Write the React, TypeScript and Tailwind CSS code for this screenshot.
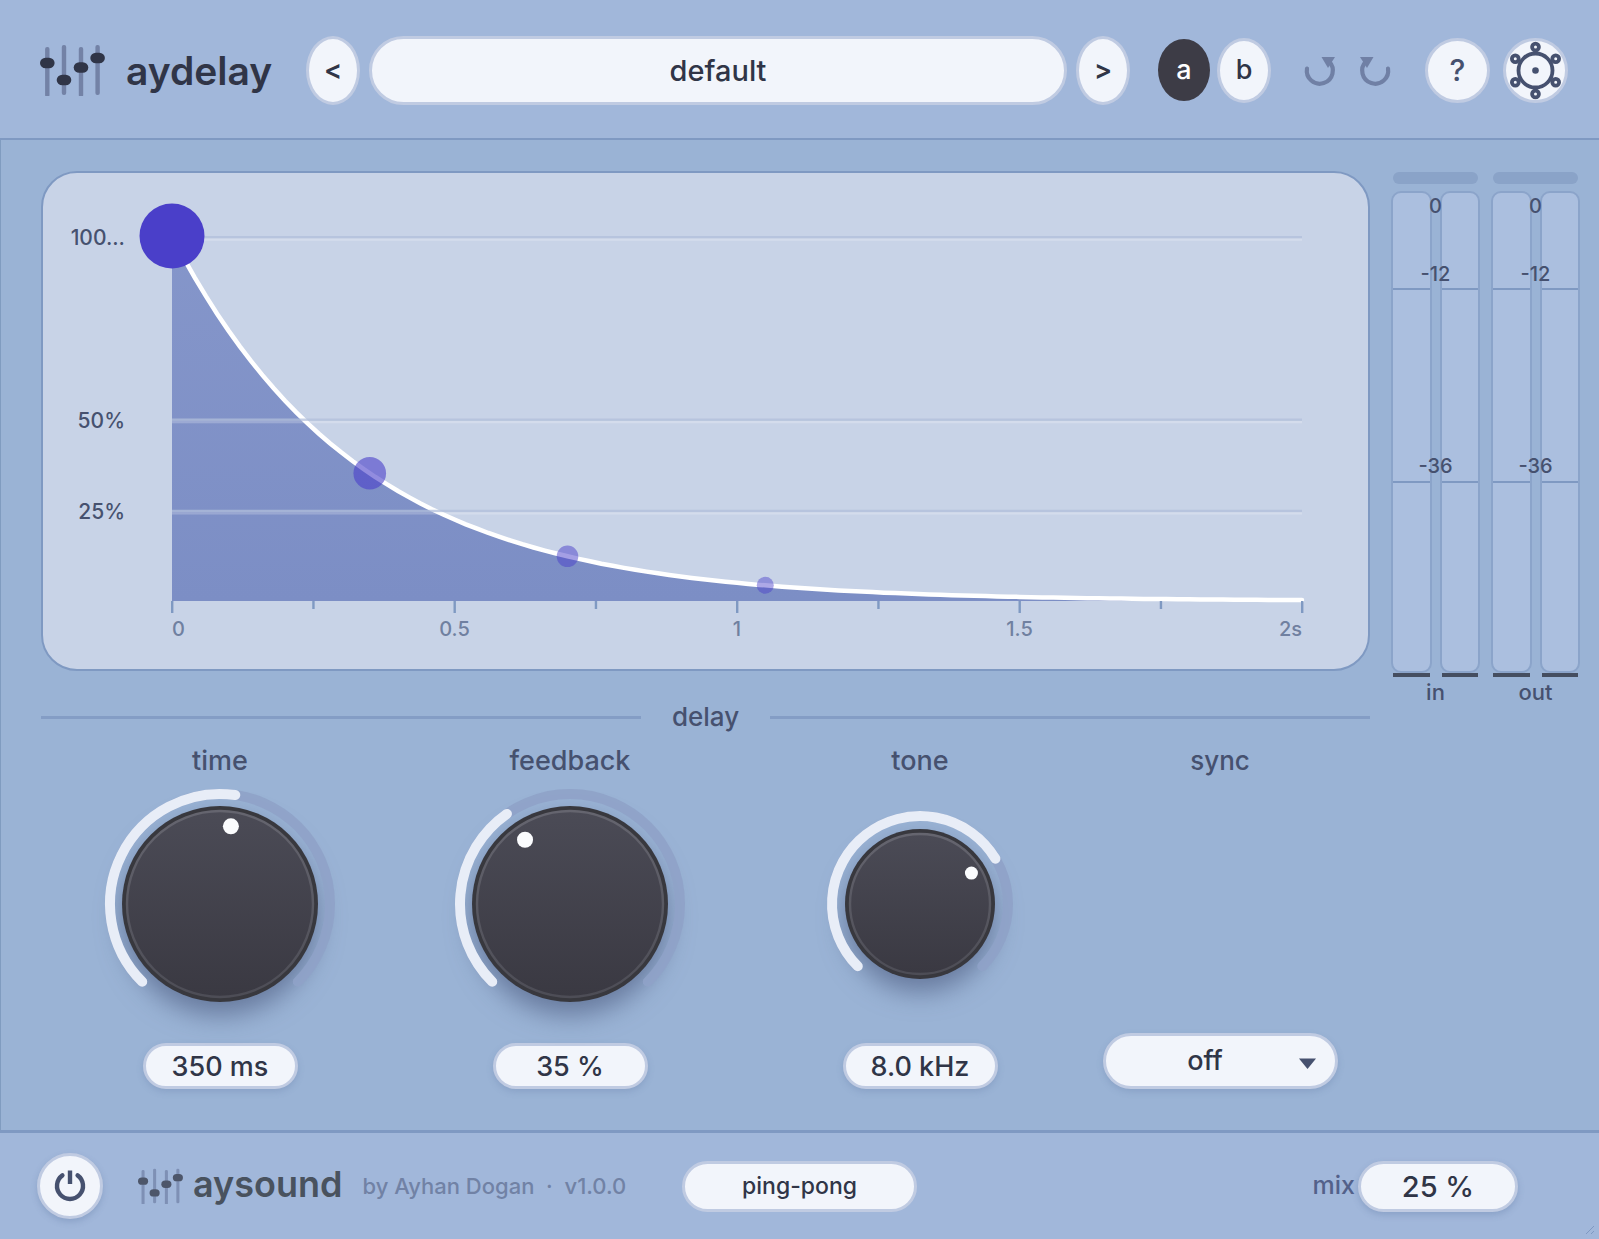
import { useState } from "react";

const curve = { left: 129, right: 1259, top: 63, bottom: 428, feedback: 0.35, time: 0.35 };

const toX = (t: number) => curve.left + ((curve.right - curve.left) * t) / 2;
const toY = (v: number) => curve.bottom - (curve.bottom - curve.top) * v;
const decay = (t: number) => Math.pow(curve.feedback, t / curve.time);

const curvePoints = Array.from({ length: 101 }, (_, i) => {
  const t = i / 50;
  return `${toX(t).toFixed(1)},${toY(decay(t)).toFixed(1)}`;
}).join(" L");

const echoes = [
  { t: 0, r: 32.5, opacity: 1 },
  { t: 0.35, r: 16.3, opacity: 0.6 },
  { t: 0.7, r: 10.8, opacity: 0.5 },
  { t: 1.05, r: 8.5, opacity: 0.45 },
];

const levels = [
  { label: "100...", value: 1 },
  { label: "50%", value: 0.5 },
  { label: "25%", value: 0.25 },
];

const ticks = [
  { t: 0, label: "0", anchor: "start" },
  { t: 0.25 },
  { t: 0.5, label: "0.5", anchor: "middle" },
  { t: 0.75 },
  { t: 1, label: "1", anchor: "middle" },
  { t: 1.25 },
  { t: 1.5, label: "1.5", anchor: "middle" },
  { t: 1.75 },
  { t: 2, label: "2s", anchor: "end" },
] as { t: number; label?: string; anchor?: "start" | "middle" | "end" }[];

const knobs = [
  { name: "time", value: "350 ms", angle: 8, radius: 98, arc: 110, dot: 8 },
  { name: "feedback", value: "35 %", angle: -35, radius: 98, arc: 110, dot: 8 },
  { name: "tone", value: "8.0 kHz", angle: 59, radius: 75, arc: 88, dot: 6.5 },
];

const lightButton =
  "flex shrink-0 items-center justify-center rounded-[50%] border-[3px] border-[#c0cbe2] bg-[#f2f5fb] font-medium text-[#303547]";

function SlidersLogo({ className, bar, handle }: { className: string; bar: string; handle: string }) {
  const faders = [
    { x: 7.3, y: 3, knob: 19 },
    { x: 24, y: 1, knob: 36 },
    { x: 41, y: 3, knob: 23.5 },
    { x: 57.6, y: 1, knob: 14 },
  ];
  return (
    <svg className={className} viewBox="0 0 65 52" aria-hidden="true">
      {faders.map((f) => (
        <g key={f.x}>
          <rect x={f.x - 2.2} y={f.y} width="4.4" height="50" rx="2" fill={bar} />
          <rect x={f.x - 7.3} y={f.knob - 5.3} width="14.6" height="10.6" rx="5.6" fill={handle} />
        </g>
      ))}
    </svg>
  );
}

function UndoIcon({ flipped = false }: { flipped?: boolean }) {
  return (
    <svg className={flipped ? "-scale-x-100" : ""} width="36" height="36" viewBox="0 0 36 36" aria-hidden="true">
      <path d="M5 16.5 A13 13 0 1 0 27 9.5" fill="none" stroke="#7080a5" strokeWidth="4.2" strokeLinecap="round" />
      <path d="M19.5 5 L33 5 L26 16 Z" fill="#7080a5" />
    </svg>
  );
}

function SettingsIcon() {
  const nodes = [
    [0, -23.4],
    [20.2, -11.7],
    [20.2, 11.7],
    [0, 23.4],
    [-20.2, 11.7],
    [-20.2, -11.7],
  ];
  return (
    <svg className="shrink-0" width="59" height="59" viewBox="-29.5 -29.5 59 59" fill="none" stroke="#46516f" strokeWidth="3.8" aria-hidden="true">
      <circle r="17" />
      <circle r="3.3" fill="#46516f" stroke="none" />
      {nodes.map(([x, y]) => (
        <circle key={`${x} ${y}`} cx={x} cy={y} r="3.4" />
      ))}
    </svg>
  );
}

function Header() {
  const [slot, setSlot] = useState("a");
  const on = "h-[62px] w-[52px] rounded-[50%] bg-[#3d3c46] font-medium text-white";
  const off = `${lightButton} h-[65px] w-[54px]`;

  return (
    <header className="flex h-[140px] items-center border-b-2 border-[#7f99c2] bg-[#a1b7da] pt-[2px] pr-[31px] pl-10">
      <div className="flex w-[266px] shrink-0 items-center gap-[21px]">
        <SlidersLogo className="w-[65px]" bar="#7382a6" handle="#303547" />
        <h1 className="pt-[2px] text-[39px] font-semibold text-[#303547]">aydelay</h1>
      </div>

      <div className="flex flex-1 items-center gap-[9px]">
        <button className={`${lightButton} h-[69px] w-[54px] text-[27px]`} aria-label="Previous preset">
          <span className="font-semibold">&lt;</span>
        </button>
        <button className="h-[69px] flex-1 rounded-full border-[3px] border-[#c0cbe2] bg-[#f2f5fb] pt-[2px] text-[29px] font-medium text-[#303547]">
          default
        </button>
        <button className={`${lightButton} h-[69px] w-[54px] text-[27px]`} aria-label="Next preset">
          <span className="font-semibold">&gt;</span>
        </button>
      </div>

      <div className="ml-[28px] flex items-center gap-[7px] text-[27px]">
        <button className={slot === "a" ? on : off} onClick={() => setSlot("a")}>
          a
        </button>
        <button className={slot === "b" ? on : off} onClick={() => setSlot("b")}>
          b
        </button>
      </div>

      <div className="ml-[31px] flex gap-[19px]">
        <button aria-label="Undo">
          <UndoIcon />
        </button>
        <button aria-label="Redo">
          <UndoIcon flipped />
        </button>
      </div>

      <div className="ml-8 flex gap-[13px]">
        <button className={`${lightButton} size-[65px] text-[30px]`} aria-label="Help">
          <span className="text-[#46516f]">?</span>
        </button>
        <button className={`${lightButton} size-[65px]`} aria-label="Settings">
          <SettingsIcon />
        </button>
      </div>
    </header>
  );
}

function DelayGraph() {
  return (
    <div className="overflow-hidden rounded-[36px] border-2 border-[#7f99c2] bg-[#c8d3e7]">
      <svg className="block w-full" viewBox="0 0 1325 496" role="img" aria-label="Echo decay">
        <defs>
          <linearGradient id="area" x1="0" y1="0" x2="0" y2="1">
            <stop offset="0" stopColor="#8596ca" />
            <stop offset="1" stopColor="#7c8ec5" />
          </linearGradient>
        </defs>

        <path d={`M${curve.left},${curve.bottom} L${curvePoints} L${curve.right},${curve.bottom} Z`} fill="url(#area)" />
        <path d={`M${curvePoints}`} fill="none" stroke="#ffffff" strokeWidth="4.5" strokeLinecap="round" />

        {levels.map((level) => (
          <g key={level.label}>
            <rect x={curve.left} y={toY(level.value)} width={curve.right - curve.left} height="2.4" fill="#b1bfdb" fillOpacity="0.75" />
            <rect x={curve.left} y={toY(level.value) + 2.4} width={curve.right - curve.left} height="2.4" fill="#ffffff" fillOpacity="0.22" />
            <text x="82" y={toY(level.value) + 9} textAnchor="end" fontSize="21" fontWeight="500" fill="#46516f">
              {level.label}
            </text>
          </g>
        ))}

        {ticks.map((tick) => (
          <g key={tick.t}>
            <rect x={toX(tick.t) - 1} y={curve.bottom} width="2.4" height={tick.label ? 12 : 8} fill="#7f99c2" />
            {tick.label && (
              <text x={toX(tick.t)} y="463" textAnchor={tick.anchor} fontSize="20" fontWeight="500" fill="#7080a0">
                {tick.label}
              </text>
            )}
          </g>
        ))}

        {echoes.map((echo) => (
          <circle key={echo.t} cx={toX(echo.t)} cy={toY(decay(echo.t))} r={echo.r} fill="#4a3fc9" fillOpacity={echo.opacity} />
        ))}
      </svg>
    </div>
  );
}

function MeterChannel() {
  return (
    <div className="flex flex-1 flex-col">
      <div className="flex h-[482px] flex-col rounded-[10px] border-2 border-[#8ba4ca] bg-[#abbfdf]">
        <div className="h-[97px] border-b-2 border-[#7f99c2]" />
        <div className="h-[193px] border-b-2 border-[#7f99c2]" />
      </div>
      <div className="mx-[2px] h-1 bg-[#454e60]" />
    </div>
  );
}

function Meter({ label }: { label: string }) {
  return (
    <div className="flex flex-1 flex-col text-center font-medium text-[#46516f]">
      <div className="mx-[2px] mb-[7px] h-3 rounded-full bg-[#8aa3c8]" />
      <div className="relative flex gap-2">
        <MeterChannel />
        <MeterChannel />
        <span className="absolute inset-x-0 top-[3px] text-[20px] leading-6">0</span>
        <span className="absolute inset-x-0 top-[71px] text-[20px] leading-6">-12</span>
        <span className="absolute inset-x-0 top-[263px] text-[20px] leading-6">-36</span>
      </div>
      <span className="text-[22px] leading-[30px]">{label}</span>
    </div>
  );
}

function arcPath(radius: number, from: number, to: number) {
  const point = (deg: number) => {
    const a = (deg * Math.PI) / 180;
    return `${(radius * Math.sin(a)).toFixed(2)} ${(-radius * Math.cos(a)).toFixed(2)}`;
  };
  return `M${point(from)} A${radius} ${radius} 0 ${to - from > 180 ? 1 : 0} 1 ${point(to)}`;
}

function Knob({ name, value, angle, radius, arc, dot }: (typeof knobs)[number]) {
  const a = (angle * Math.PI) / 180;
  const reach = radius * 0.8;

  return (
    <div className="flex flex-col items-center">
      <label htmlFor={name} className="text-[27px] leading-9 font-medium text-[#46516f]">
        {name}
      </label>
      <div className="relative mt-[5px]">
        <svg width="240" height="240" viewBox="-120 -120 240 240" className="overflow-visible" aria-hidden="true">
          <defs>
            <linearGradient id="face" x1="0" y1="0" x2="0" y2="1">
              <stop offset="0" stopColor="#4b4b56" />
              <stop offset="1" stopColor="#3a3942" />
            </linearGradient>
            <linearGradient id="rim" x1="0" y1="0" x2="0" y2="1">
              <stop offset="0" stopColor="#65656f" />
              <stop offset="1" stopColor="#4d4d56" />
            </linearGradient>
            <filter id="drop" x="-30%" y="-30%" width="160%" height="170%" colorInterpolationFilters="sRGB">
              <feDropShadow dx="0" dy="13" stdDeviation="13" floodColor="#4c5a80" floodOpacity="0.65" />
            </filter>
          </defs>
          <circle r={radius} fill="#38383e" filter="url(#drop)" />
          <circle r={radius - 5} fill="url(#face)" stroke="url(#rim)" strokeWidth="2.4" />
          <path d={arcPath(arc, -135, 135)} fill="none" stroke="#8fa2c8" strokeOpacity="0.9" strokeWidth="10" strokeLinecap="round" />
          <path d={arcPath(arc, -135, angle)} fill="none" stroke="#e8edf7" strokeWidth="10" strokeLinecap="round" />
          <circle cx={reach * Math.sin(a)} cy={-reach * Math.cos(a)} r={dot} fill="#fbfcfe" />
        </svg>
        <input
          id={name}
          type="range"
          min="-135"
          max="135"
          defaultValue={angle}
          className="absolute inset-0 h-full w-full cursor-pointer opacity-0"
        />
      </div>
      <input
        type="text"
        aria-label={`${name} value`}
        defaultValue={value}
        className="mt-[19px] h-[46px] w-[155px] rounded-full border-[3px] border-[#c0cbe2] bg-[#f2f5fb] text-center text-[27px] font-medium text-[#303547] shadow-[0_3px_6px_rgba(90,115,160,0.25)]"
      />
    </div>
  );
}

function DelayControls() {
  return (
    <section>
      <div className="mt-7 flex items-center gap-[31px]">
        <div className="h-[3px] flex-1 bg-[#849dc5]" />
        <h2 className="text-[26px] leading-9 font-medium text-[#46516f]">delay</h2>
        <div className="h-[3px] flex-1 bg-[#849dc5]" />
      </div>
      <div className="mt-2 grid grid-cols-[7fr_7fr_7fr_5fr] pr-[25px] pl-1">
        {knobs.map((knob) => (
          <Knob key={knob.name} {...knob} />
        ))}
        <div className="flex flex-col items-center justify-between">
          <label htmlFor="sync" className="text-[26px] leading-9 font-medium text-[#46516f]">
            sync
          </label>
          <div className="relative w-[235px]">
            <select
              id="sync"
              className="block h-14 w-full appearance-none rounded-full border-[3px] border-[#c0cbe2] bg-[#f2f5fb] pr-[30px] text-center text-[27px] font-medium text-[#303547] shadow-[0_3px_6px_rgba(90,115,160,0.25)]"
            >
              <option>off</option>
              <option>1/4</option>
              <option>1/8</option>
              <option>1/16</option>
            </select>
            <svg className="pointer-events-none absolute top-[25px] right-[22px]" width="17" height="11" viewBox="0 0 17 11" aria-hidden="true">
              <path d="M0 0.5 H17 L8.5 11 Z" fill="#46516f" />
            </svg>
          </div>
        </div>
      </div>
    </section>
  );
}

function Footer() {
  return (
    <footer className="relative grid h-[109px] grid-cols-[1fr_auto_1fr] items-center border-t-[3px] border-[#7f99c2] bg-[#a1b7da]">
      <div className="flex items-center pl-[37px] whitespace-nowrap">
        <button className={`${lightButton} size-[66px] shadow-[0_3px_6px_rgba(90,115,160,0.3)]`} aria-label="Bypass">
          <svg width="34" height="34" viewBox="-17 -17 34 34" fill="none" stroke="#46516f" strokeWidth="4.4" aria-hidden="true">
            <path d="M-7.6 -10.6 A13 13 0 1 0 7.6 -10.6" strokeLinecap="round" />
            <path d="M0 -15.5 V-2" />
          </svg>
        </button>
        <SlidersLogo className="ml-[35px] w-[45px]" bar="#7e90b5" handle="#4d566a" />
        <span className="ml-[10px] pb-1 text-[36px] font-semibold text-[#49525e]">aysound</span>
        <span className="ml-5 text-[22px] font-medium text-[#7182a5]">
          by Ayhan Dogan&nbsp; ·&nbsp; v1.0.0
        </span>
      </div>

      <button className="h-[51px] w-[235px] rounded-full border-[3px] border-[#c0cbe2] bg-[#f2f5fb] text-[23px] font-medium text-[#303547]">
        ping-pong
      </button>

      <div className="flex items-center justify-end gap-[3px] pr-[81px]">
        <label htmlFor="mix" className="text-[25px] font-medium text-[#53618a]">
          mix
        </label>
        <input
          id="mix"
          type="text"
          defaultValue="25 %"
          className="h-[51px] w-[160px] rounded-full border-[3px] border-[#c0cbe2] bg-[#f2f5fb] text-center text-[29px] font-medium text-[#303547] shadow-[0_3px_6px_rgba(90,115,160,0.3)]"
        />
      </div>

      <svg className="absolute right-1 bottom-1" width="10" height="10" viewBox="0 0 10 10" stroke="#7f99c2" aria-hidden="true">
        <path d="M1 9 L9 1 M6 9 L9 6" />
      </svg>
    </footer>
  );
}

function App() {
  return (
    <div className="flex min-h-screen flex-col bg-[#9ab3d5] font-['Inter',sans-serif]">
      <Header />
      <main className="flex flex-1 items-start gap-[21px] border-l border-[#809cc0] pt-[31px] pr-[19px] pb-[41px] pl-10">
        <div className="flex-1">
          <DelayGraph />
          <DelayControls />
        </div>
        <div className="mt-px flex w-[189px] shrink-0 gap-[11px]">
          <Meter label="in" />
          <Meter label="out" />
        </div>
      </main>
      <Footer />
    </div>
  );
}

export default App;
